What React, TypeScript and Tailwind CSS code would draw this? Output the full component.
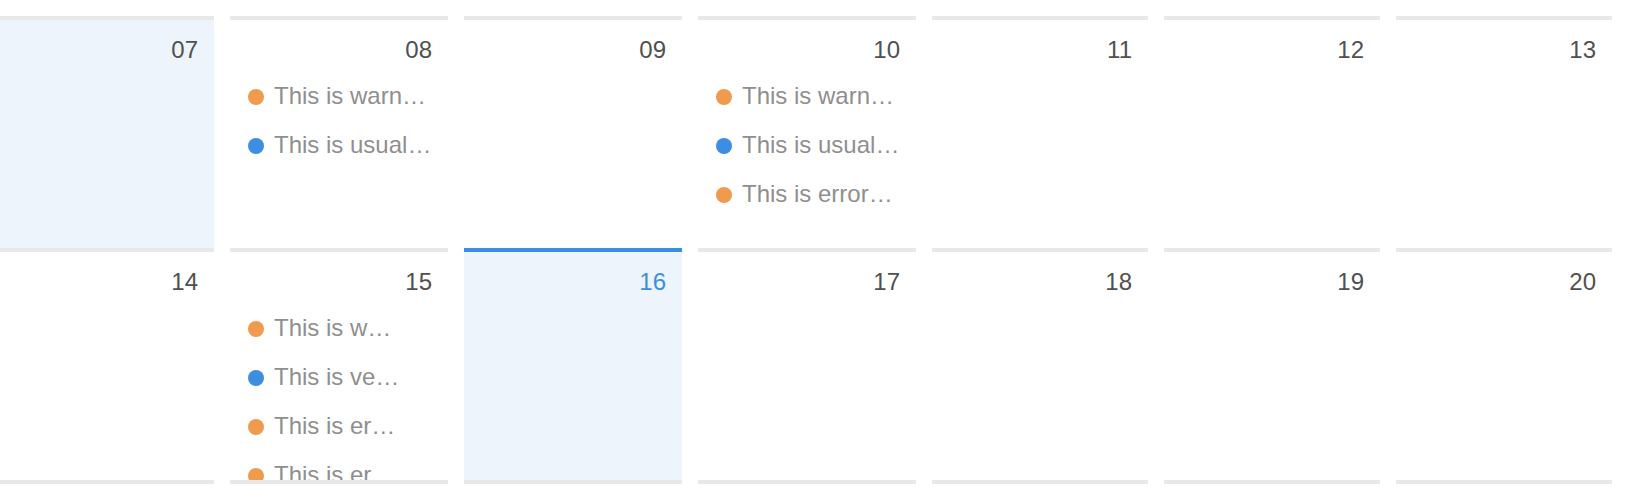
import React from "react";

type Ev = { color: "warning" | "usual"; text: string };

const dotColor = {
  warning: "bg-[#f09a4e]",
  usual: "bg-[#3d8ee2]",
};

const rows: { day: string; events?: Ev[]; selected?: boolean; today?: boolean }[][] = [
  [
    { day: "07", selected: true },
    {
      day: "08",
      events: [
        { color: "warning", text: "This is warn…" },
        { color: "usual", text: "This is usual…" },
      ],
    },
    { day: "09" },
    {
      day: "10",
      events: [
        { color: "warning", text: "This is warn…" },
        { color: "usual", text: "This is usual…" },
        { color: "warning", text: "This is error…" },
      ],
    },
    { day: "11" },
    { day: "12" },
    { day: "13" },
  ],
  [
    { day: "14" },
    {
      day: "15",
      events: [
        { color: "warning", text: "This is w…" },
        { color: "usual", text: "This is ve…" },
        { color: "warning", text: "This is er…" },
        { color: "warning", text: "This is er…" },
      ],
    },
    { day: "16", today: true },
    { day: "17" },
    { day: "18" },
    { day: "19" },
    { day: "20" },
  ],
];

function Cell({ day, events, selected, today }: { day: string; events?: Ev[]; selected?: boolean; today?: boolean }) {
  return (
    <div
      className={`mx-2 border-t-4 px-4 pt-2 ${today ? "border-[#3d8ee2]" : "border-[#e8e8e8]"} ${
        selected || today ? "bg-[#edf4fb]" : "bg-white"
      }`}
    >
      <div className={`h-12 text-right text-[24px] leading-[44px] ${today ? "text-[#3d8ee2]" : "text-[#505050]"}`}>
        {day}
      </div>
      <div className="h-[172px] overflow-hidden">
        {events && (
          <ul>
            {events.map((ev, i) => (
              <li key={i} className="flex h-[49px] items-start">
                <span className={`ml-[2px] mr-[10px] mt-[13px] h-4 w-4 shrink-0 rounded-full ${dotColor[ev.color]}`} />
                <span className="truncate whitespace-nowrap text-[24px] leading-[39px] text-[#8f8f8f]">{ev.text}</span>
              </li>
            ))}
          </ul>
        )}
      </div>
    </div>
  );
}

export default function App() {
  return (
    <div className="h-[498px] w-full overflow-hidden bg-white pt-4 font-['Liberation_Sans',Arial,sans-serif]">
      <div className="ml-[-11px] grid w-[1631px] grid-cols-[233px_234px_234px_234px_232px_232px_232px]">
        {rows.map((row, r) =>
          row.map((c) => <Cell key={`${r}-${c.day}`} {...c} />)
        )}
        {/* next week's row, only its top edge is in view */}
        {Array.from({ length: 7 }).map((_, i) => (
          <div key={`next-${i}`} className="mx-2 h-[18px] border-t-4 border-[#e8e8e8]" />
        ))}
      </div>
    </div>
  );
}
